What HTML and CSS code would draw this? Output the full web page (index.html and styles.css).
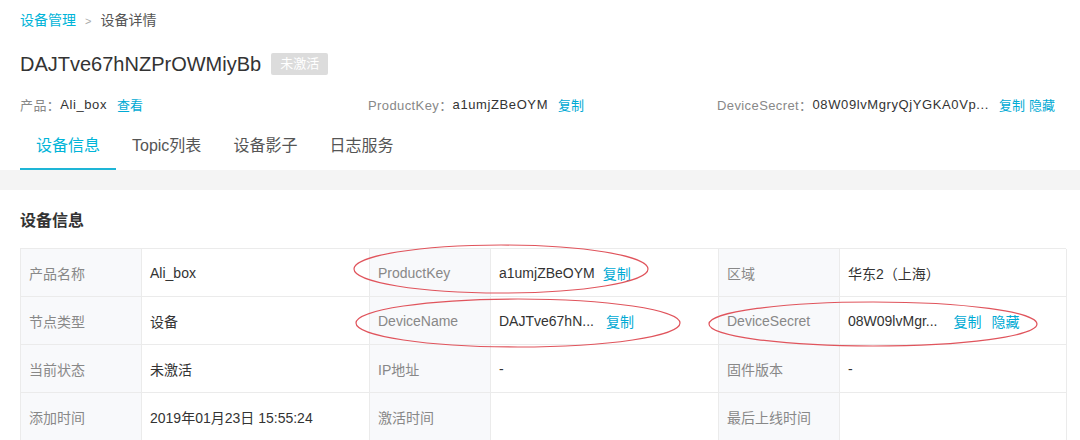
FILE: index.html
```html
<!DOCTYPE html>
<html lang="zh-CN">
<head>
<meta charset="utf-8">
<title>设备详情</title>
<link rel="stylesheet" href="styles.css">
</head>
<body>
<div class="header">
  <div class="breadcrumb"><a class="link">设备管理</a><span class="sep">&gt;</span><span class="current">设备详情</span></div>
  <div class="title-row"><span class="title">DAJTve67hNZPrOWMiyBb</span><span class="badge">未激活</span></div>
  <div class="info-row">
    <div class="info"><span class="lbl">产品：</span><span class="val">Ali_box</span><a class="link">查看</a></div>
    <div class="info"><span class="lbl">ProductKey：</span><span class="val">a1umjZBeOYM</span><a class="link">复制</a></div>
    <div class="info"><span class="lbl">DeviceSecret：</span><span class="val">08W09lvMgryQjYGKA0Vp...</span><a class="link">复制</a><a class="link tight">隐藏</a></div>
  </div>
  <div class="tabs">
    <div class="tab active">设备信息</div>
    <div class="tab">Topic列表</div>
    <div class="tab">设备影子</div>
    <div class="tab">日志服务</div>
  </div>
</div>
<div class="band"></div>
<div class="section">
  <h2 class="heading">设备信息</h2>
  <div class="grid">
    <div class="cell label">产品名称</div><div class="cell value">Ali_box</div>
    <div class="cell label">ProductKey</div><div class="cell value">a1umjZBeOYM<a class="link">复制</a></div>
    <div class="cell label">区域</div><div class="cell value">华东2（上海）</div>

    <div class="cell label">节点类型</div><div class="cell value">设备</div>
    <div class="cell label">DeviceName</div><div class="cell value">DAJTve67hN...<a class="link mid">复制</a></div>
    <div class="cell label">DeviceSecret</div><div class="cell value">08W09lvMgr...<a class="link wide">复制</a><a class="link next">隐藏</a></div>

    <div class="cell label">当前状态</div><div class="cell value">未激活</div>
    <div class="cell label">IP地址</div><div class="cell value">-</div>
    <div class="cell label">固件版本</div><div class="cell value">-</div>

    <div class="cell label">添加时间</div><div class="cell value">2019年01月23日 15:55:24</div>
    <div class="cell label">激活时间</div><div class="cell value"></div>
    <div class="cell label">最后上线时间</div><div class="cell value"></div>
  </div>
</div>
<svg class="marks" width="1080" height="440" viewBox="0 0 1080 440">
  <ellipse cx="501" cy="269" rx="147" ry="24"/>
  <ellipse cx="518" cy="323" rx="162" ry="24"/>
  <ellipse cx="873" cy="324" rx="164" ry="22"/>
</svg>
</body>
</html>
```
FILE: styles.css
```css
* { box-sizing: border-box; }
html, body { margin: 0; padding: 0; }
body {
  width: 1080px;
  height: 440px;
  overflow: hidden;
  background: #fff;
  font-family: "Liberation Sans", "Noto Sans CJK SC", sans-serif;
  color: #333;
  position: relative;
}
.link { color: #00aad4; cursor: pointer; }
.header { padding: 0 14px 0 20px; }
.breadcrumb { height: 40px; line-height: 40px; font-size: 14px; }
.breadcrumb .link { color: #00b4d8; }
.breadcrumb .sep { color: #aaa; margin: 0 9px; font-size: 11px; }
.breadcrumb .current { color: #555; }
.title-row { height: 48px; display: flex; align-items: center; }
.title { font-size: 20px; color: #333; }
.badge {
  margin-left: 10px;
  height: 22px;
  line-height: 22px;
  padding: 0 9px;
  font-size: 13px;
  color: #fff;
  background: #dcdcdc;
  border-radius: 2px;
}
.info-row {
  height: 32px;
  display: grid;
  grid-template-columns: 348px 349px 349px;
  align-items: center;
  font-size: 13px;
}
.info { display: flex; align-items: center; white-space: nowrap; }
.info .lbl { color: #888; letter-spacing: 0.4px; }
.info .val { color: #333; letter-spacing: 0.6px; }
.info .link { margin-left: 10px; }
.info .link.tight { margin-left: 4px; }
.tabs { display: flex; height: 50px; }
.tab {
  padding: 14px 16px 10px;
  line-height: 24px;
  font-size: 16px;
  color: #555;
  border-bottom: 2px solid transparent;
}
.tab.active { color: #00b4d8; border-bottom-color: #1eb5d6; }
.band { height: 20px; background: #f4f4f4; }
.section { padding: 19px 14px 0 20px; }
.heading {
  margin: 0 0 15px;
  font-size: 16px;
  line-height: 24px;
  font-weight: bold;
  color: #333;
}
.grid {
  display: grid;
  grid-template-columns: 121px 228px 121px 228px 121px 227px;
  grid-auto-rows: 48px;
  border-top: 1px solid #ebebeb;
  border-left: 1px solid #ebebeb;
  font-size: 14px;
}
.cell {
  display: flex;
  align-items: center;
  padding: 0 8px;
  border-right: 1px solid #ebebeb;
  border-bottom: 1px solid #ebebeb;
  white-space: nowrap;
}
.label { background: #f8f9fb; color: #888; }
.value { color: #333; }
.value .link { margin-left: 8px; }
.value .link.mid { margin-left: 12px; }
.value .link.wide { margin-left: 16px; }
.value .link.next { margin-left: 10px; }
.marks {
  position: absolute;
  top: 0;
  left: 0;
  pointer-events: none;
}
.marks ellipse { fill: none; stroke: #e0545c; stroke-width: 1.2; }
```
